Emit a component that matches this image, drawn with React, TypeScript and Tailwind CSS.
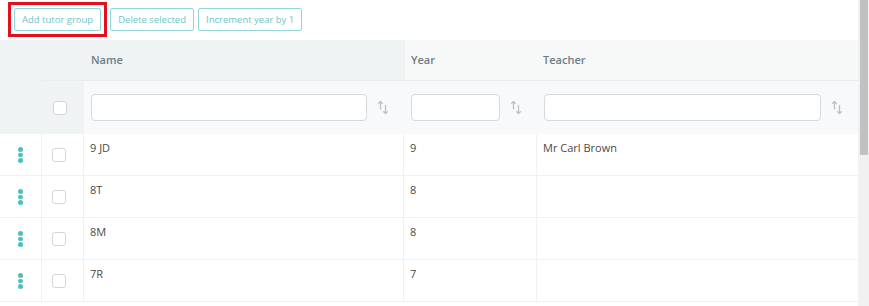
import React from "react";

const rows = [
  { name: "9 JD", year: "9", teacher: "Mr Carl Brown" },
  { name: "8T", year: "8", teacher: "" },
  { name: "8M", year: "8", teacher: "" },
  { name: "7R", year: "7", teacher: "" },
];

function SortIcon() {
  return (
    <svg width="12" height="15" viewBox="0 0 12 15" fill="none" stroke="#b9c3c8" strokeWidth="1.3" strokeLinecap="round" strokeLinejoin="round">
      <path d="M3.5 9V1.5M1.7 3.3L3.5 1.5L5.3 3.3" />
      <path d="M8.5 5.5V13.5M6.7 11.7L8.5 13.5L10.3 11.7" />
    </svg>
  );
}

function Checkbox() {
  return <div className="w-[14px] h-[14px] rounded-[3px] border border-[#d3d7da] bg-white" />;
}

function Dots() {
  return (
    <div className="flex flex-col gap-[1px]">
      <span className="w-[4.5px] h-[4.5px] rounded-full bg-[#48c0c0]" />
      <span className="w-[4.5px] h-[4.5px] rounded-full bg-[#48c0c0]" />
      <span className="w-[4.5px] h-[4.5px] rounded-full bg-[#48c0c0]" />
    </div>
  );
}

const btn =
  "h-[23px] px-[7px] border border-[#93d6d6] rounded-[2px] bg-white text-[9.5px] text-[#6cc6c6] leading-none flex items-center";

export default function App() {
  return (
    <div
      className="flex w-[869px] h-[306px] overflow-hidden bg-white"
      style={{ fontFamily: '"Open Sans", "Noto Sans", sans-serif' }}
    >
      <div className="flex-1 flex flex-col">
        <div className="h-[40px] flex items-start pt-[8px] pl-[14px]">
          <span className="flex mr-[9px] outline-[3px] outline-solid outline-[#e5101f] outline-offset-[3px]">
            <button className={btn}>Add tutor group</button>
          </span>
          <button className={btn + " mr-[4px]"}>Delete selected</button>
          <button className={btn}>Increment year by 1</button>
        </div>
        <div className="grid grid-cols-[42px_42px_320px_133px_1fr]">
          {/* header row */}
          <div className="row-span-2 bg-[#f0f3f4]" />
          <div className="h-[40px] bg-[#f0f3f4]" />
          <div className="h-[40px] bg-[#f0f3f4] flex items-center px-[7px] text-[11px] font-semibold text-[#6c7d88]">Name</div>
          <div className="h-[40px] bg-[#f7f9f9] border-l border-[#eceff0] flex items-center px-[6px] text-[11px] font-semibold text-[#6c7d88]">Year</div>
          <div className="h-[40px] bg-[#f7f9f9] flex items-center px-[6px] text-[11px] font-semibold text-[#6c7d88]">Teacher</div>
          {/* filter row */}
          <div className="h-[54px] bg-[#f0f3f4] border-t border-[#e8ecee] flex items-center pl-[11px]">
            <Checkbox />
          </div>
          <div className="h-[54px] bg-[#f7f9fa] border-t border-[#e8ecee] flex items-center pl-[7px] pr-[15px] gap-[10px]">
            <div className="h-[27px] flex-1 bg-white border border-[#d5dadd] rounded-[4px]" />
            <SortIcon />
          </div>
          <div className="h-[54px] bg-[#f7f9fa] border-t border-[#e8ecee] flex items-center pl-[7px] pr-[15px] gap-[10px]">
            <div className="h-[27px] flex-1 bg-white border border-[#d5dadd] rounded-[4px]" />
            <SortIcon />
          </div>
          <div className="h-[54px] bg-[#f7f9fa] border-t border-[#e8ecee] flex items-center pl-[7px] pr-[15px] gap-[10px]">
            <div className="h-[27px] flex-1 bg-white border border-[#d5dadd] rounded-[4px]" />
            <SortIcon />
          </div>
          {/* body rows */}
          {rows.map((r, i) => (
            <React.Fragment key={i}>
              <div className="h-[42px] border-b border-[#eff1f2] border-r flex items-center justify-center pt-[1px]">
                <Dots />
              </div>
              <div className="h-[42px] border-b border-[#eff1f2] border-r flex items-center pl-[10px]">
                <Checkbox />
              </div>
              <div className="h-[42px] border-b border-[#eff1f2] border-r px-[6px] pt-[6px] text-[11px] leading-[16px] text-[#4a4a4a]">{r.name}</div>
              <div className="h-[42px] border-b border-[#eff1f2] border-r px-[6px] pt-[6px] text-[11px] leading-[16px] text-[#4a4a4a]">{r.year}</div>
              <div className="h-[42px] border-b border-[#eff1f2] px-[6px] pt-[6px] text-[11px] leading-[16px] text-[#4a4a4a]">{r.teacher}</div>
            </React.Fragment>
          ))}
        </div>
      </div>
      <div className="w-[11px] bg-[#f1f1f1] flex justify-center">
        <div className="w-[8px] h-[155px] bg-[#c1c1c1]" />
      </div>
    </div>
  );
}
